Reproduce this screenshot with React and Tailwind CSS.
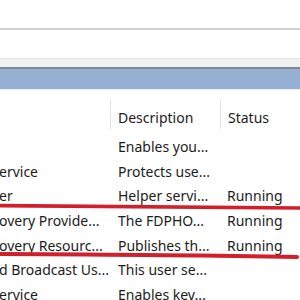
const rows = [
  { name: "", desc: "Enables you...", status: "" },
  { name: "ervice", desc: "Protects use...", status: "" },
  { name: "er", desc: "Helper servi...", status: "Running" },
  { name: "overy Provide...", desc: "The FDPHO...", status: "Running" },
  { name: "overy Resourc...", desc: "Publishes th...", status: "Running" },
  { name: "d Broadcast Us...", desc: "This user se...", status: "" },
  { name: "ervice", desc: "Enables key...", status: "" },
];

export default function App() {
  return (
    <div className="relative w-[300px] h-[300px] overflow-hidden bg-white text-[#1b1b1b] font-['Noto_Sans',sans-serif] text-[14px]">
      {/* toolbar / address area */}
      <div className="h-[28px]" />
      <div className="h-[2px] bg-[#d2d2d2]" />
      <div className="h-[28px]" />
      <div className="h-[9px] bg-[#f0f0f0] border-t border-[#e2e2e2]" />
      <div className="h-[2px] bg-[#7e8893]" />
      <div className="h-[20px] bg-[#95b0d3]" />
      <div className="h-[1px] bg-[#e9eff7]" />

      {/* column headers */}
      <div className="flex h-[44px] items-start">
        <div className="w-[110px] shrink-0" />
        <div className="w-[110px] shrink-0 flex items-start">
          <div className="w-px h-[30px] mt-[9px] bg-[#e4e4e4]" />
          <span className="pl-[7px] mt-[18px] leading-[20px]">Description</span>
        </div>
        <div className="flex-1 flex items-start">
          <div className="w-px h-[30px] mt-[9px] bg-[#e4e4e4]" />
          <span className="pl-[7px] mt-[18px] leading-[20px]">Status</span>
        </div>
      </div>

      {/* service rows */}
      <div className="flex flex-col">
        {rows.map((r, i) => (
          <div key={i} className="flex h-[24.7px] items-center whitespace-nowrap">
            <div className="w-[110px] shrink-0 overflow-hidden -ml-[1px]">{r.name}</div>
            <div className="w-[110px] shrink-0 pl-[9px]">{r.desc}</div>
            <div className="flex-1 pl-[8px]">{r.status}</div>
          </div>
        ))}
      </div>

      {/* marker highlight */}
      <svg className="absolute inset-0 pointer-events-none" width="300" height="300" viewBox="0 0 300 300">
        <path d="M-2 205.6 Q150 206.2 302 208" stroke="#d11f2b" strokeWidth="3.6" fill="none" strokeLinecap="round" />
        <path d="M-2 254 Q180 254.8 297 257" stroke="#d11f2b" strokeWidth="4" fill="none" strokeLinecap="round" />
      </svg>
    </div>
  );
}
